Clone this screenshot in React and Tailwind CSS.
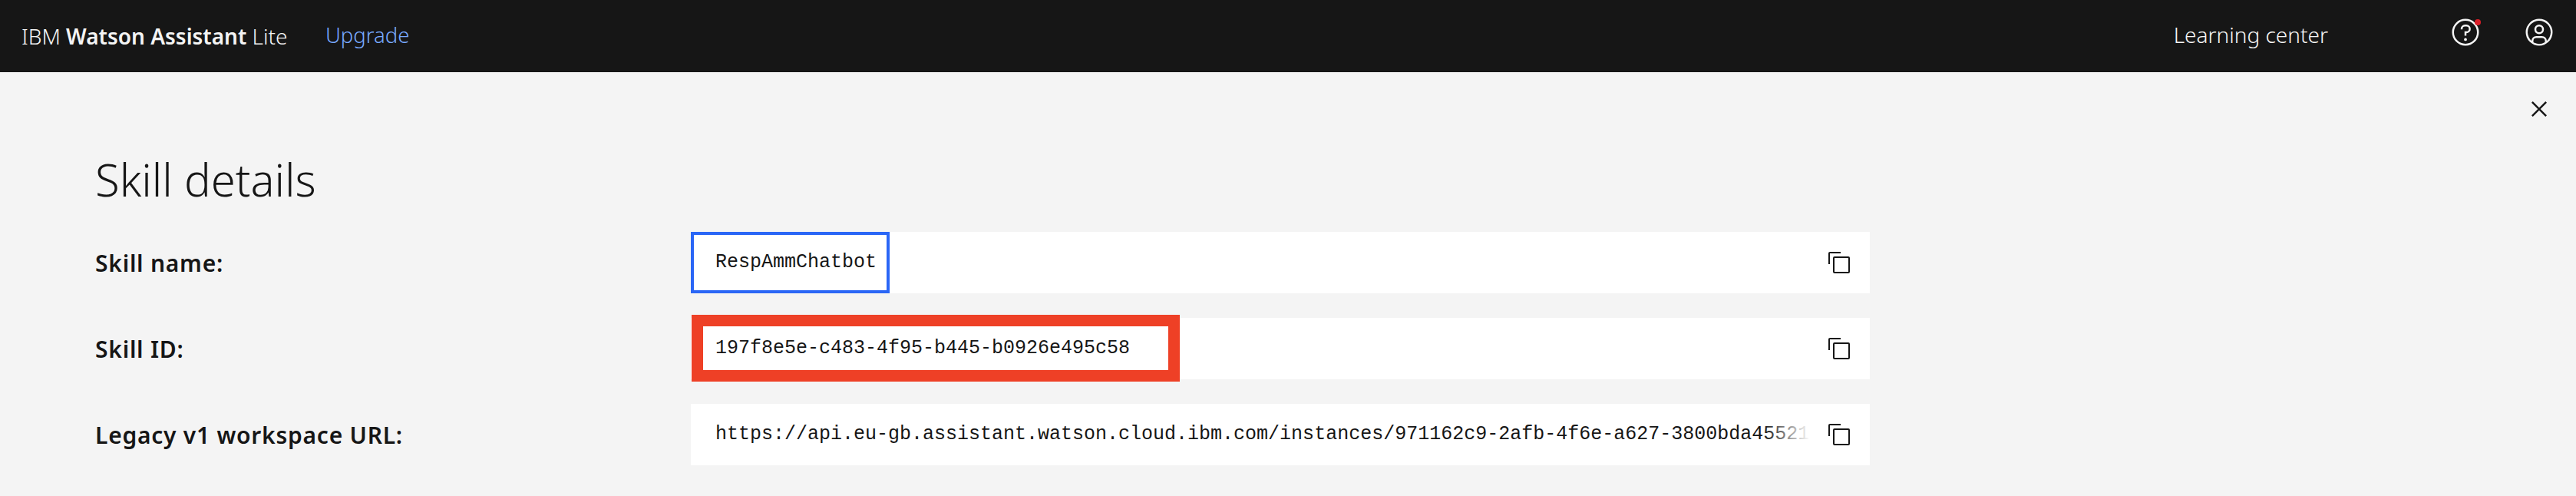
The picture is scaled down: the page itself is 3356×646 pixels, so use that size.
import React from "react";

const Copy = () => (
  <svg className="w-8 h-8 shrink-0" viewBox="0 0 32 32" fill="#161616">
    <path d="M28,10V28H10V10H28m0-2H10a2,2,0,0,0-2,2V28a2,2,0,0,0,2,2H28a2,2,0,0,0,2-2V10a2,2,0,0,0-2-2Z" />
    <path d="M4,18H2V4A2,2,0,0,1,4,2H18V4H4Z" />
  </svg>
);

const Row = ({ label, children, last }) => (
  <div className={`flex items-center ${last ? "" : "mb-8"}`}>
    <div className="w-[776px] shrink-0 text-[30px] tracking-[0.75px] font-semibold text-[#161616] whitespace-nowrap">{label}</div>
    <div className="relative w-[1536px] h-20 bg-white flex items-center">{children}</div>
  </div>
);

const Mono = ({ children }) => (
  <span className="font-['Liberation_Mono',monospace] text-[25px] text-[#161616] whitespace-nowrap">{children}</span>
);

const CopyBtn = () => (
  <div className="absolute right-[24px] top-[24px]">
    <Copy />
  </div>
);

export default function App() {
  return (
    <div className="w-[3356px] h-[646px] overflow-hidden bg-[#f4f4f4] font-['Noto_Sans',sans-serif]">
      <header className="h-[94px] bg-[#161616] flex items-center text-[#f4f4f4] text-[28px]">
        <div className="ml-[28px] w-[396px] whitespace-nowrap font-light -mt-[1px]">
          IBM <span className="font-semibold">Watson Assistant</span> Lite
        </div>
        <a className="text-[#78a9ff] font-light text-[27.5px] -mt-[2px]">Upgrade</a>
        <div className="ml-auto font-light -mt-[4px]">Learning center</div>
        <div className="relative ml-[159px] w-10 h-10 -mt-[10px]">
          <svg className="w-10 h-10" viewBox="0 0 32 32" fill="#f4f4f4">
            <path d="M16,2A14,14,0,1,0,30,16,14,14,0,0,0,16,2Zm0,26A12,12,0,1,1,28,16,12,12,0,0,1,16,28Z" />
            <circle cx="16" cy="23.5" r="1.5" />
            <path d="M17,8H15.5A4.49,4.49,0,0,0,11,12.5V13h2v-.5A2.5,2.5,0,0,1,15.5,10H17a2.5,2.5,0,0,1,0,5H15v4.5h2V17a4.5,4.5,0,0,0,0-9Z" />
          </svg>
          <span className="absolute left-[32px] top-[3px] w-2 h-2 rounded-full bg-[#da1e28]" />
        </div>
        <svg className="ml-[56px] mr-[28px] w-10 h-10 -mt-[10px]" viewBox="0 0 32 32" fill="#f4f4f4">
          <path d="M16,8a5,5,0,1,0,5,5A5,5,0,0,0,16,8Zm0,8a3,3,0,1,1,3-3A3,3,0,0,1,16,16Z" />
          <path d="M16,2A14,14,0,1,0,30,16,14.0158,14.0158,0,0,0,16,2ZM10,26.3765V25a3.0033,3.0033,0,0,1,3-3h6a3.0033,3.0033,0,0,1,3,3v1.3765a11.8989,11.8989,0,0,1-12,0Zm13.9925-1.4507A5.0016,5.0016,0,0,0,19,20H13a5.0016,5.0016,0,0,0-4.9925,4.9258,12,12,0,1,1,15.985,0Z" />
        </svg>
      </header>
      <main className="relative pl-[124px]">
        <svg className="absolute right-[28px] top-[28px] w-10 h-10" viewBox="0 0 32 32" fill="#161616">
          <path d="M24 9.4L22.6 8 16 14.6 9.4 8 8 9.4 14.6 16 8 22.6 9.4 24 16 17.4 22.6 24 24 22.6 17.4 16 24 9.4z" />
        </svg>
        <h1 className="pt-[108px] h-[208px] text-[58px] leading-[64px] font-light text-[#161616]">Skill details</h1>
        <Row label="Skill name:">
          <div className="h-20 w-[259px] border-4 border-[#2a66f6] pl-[28px] flex items-center">
            <Mono>RespAmmChatbot</Mono>
          </div>
          <CopyBtn />
        </Row>
        <Row label="Skill ID:">
          <div className="pl-[32px]">
            <Mono>197f8e5e-c483-4f95-b445-b0926e495c58</Mono>
          </div>
          <div className="absolute left-[1px] -top-1 w-[636px] h-[87px] border-[15px] border-[#ee4026]" />
          <CopyBtn />
        </Row>
        <Row label="Legacy v1 workspace URL:" last>
          <div className="relative ml-[32px] w-[1426px] overflow-hidden">
            <Mono>https://api.eu-gb.assistant.watson.cloud.ibm.com/instances/971162c9-2afb-4f6e-a627-3800bda45521</Mono>
            <div className="absolute right-0 top-0 bottom-0 w-[60px] bg-linear-to-r from-transparent to-white" />
          </div>
          <CopyBtn />
        </Row>
      </main>
    </div>
  );
}
